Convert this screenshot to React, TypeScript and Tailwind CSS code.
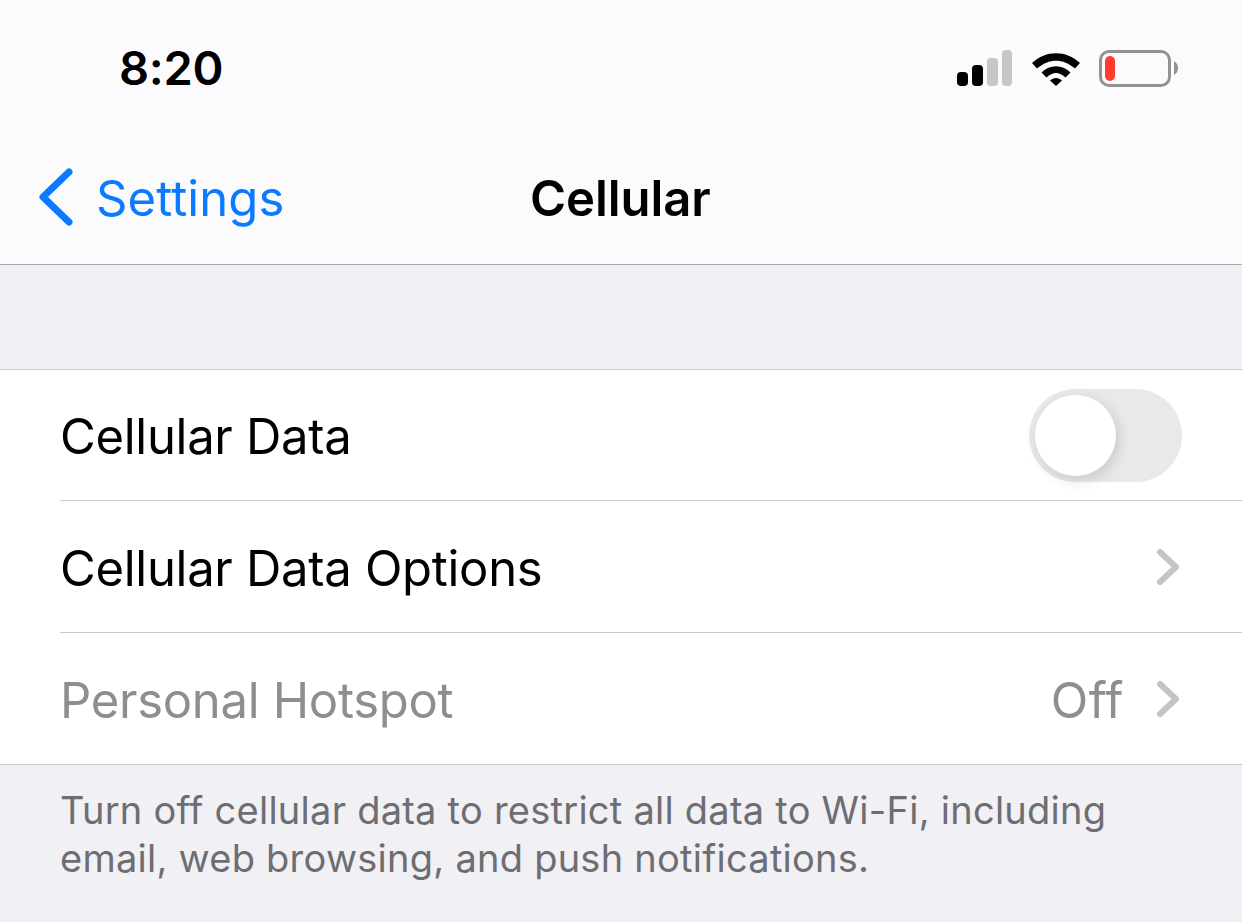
const font = "font-['Inter',sans-serif]";

function SignalIcon() {
  return (
    <svg width="56" height="37" viewBox="0 0 56 37">
      <rect x="1" y="22" width="11" height="14" rx="4" fill="#000" />
      <rect x="16" y="15" width="11" height="21" rx="4" fill="#000" />
      <rect x="31" y="8" width="11" height="28" rx="4" fill="#c7c7c9" />
      <rect x="46" y="0" width="10" height="36" rx="4" fill="#c7c7c9" />
    </svg>
  );
}

function WifiIcon() {
  return (
    <svg width="48" height="36" viewBox="0 0 48 36">
      <path d="M0 13 C14 0 34 0 48 13 L43 18.5 C31 8 17 8 5 18.5 Z" fill="#000" />
      <path d="M9.5 22.5 C18 14 30 14 38.500 22.500 L33.500 27.500 C27 21.500 21 21.500 14.500 27.500 Z" fill="#000" />
      <path d="M18 30.500 C21.500 27 26.500 27 30 30.500 L24 36 Z" fill="#000" />
    </svg>
  );
}

function BatteryIcon() {
  return (
    <div className="-ml-[1px] flex items-center gap-[3px]">
      <div className="flex h-[37px] w-[72px] items-center rounded-[10px] border-[3px] border-[#929293] p-[3px]">
        <div className="h-[25px] w-[10px] rounded-[5px] bg-[#ff3b30]" />
      </div>
      <svg width="4" height="14" viewBox="0 0 4 14">
        <path d="M0 0 C3 2 4 4 4 7 C4 10 3 12 0 14 Z" fill="#929293" />
      </svg>
    </div>
  );
}

function Chevron() {
  return (
    <svg width="24" height="38" viewBox="0 0 24 38" fill="none">
      <path d="M4 4 L20 19 L4 34" stroke="#c4c4c7" strokeWidth="6" strokeLinecap="round" strokeLinejoin="round" />
    </svg>
  );
}

function Row({ label, muted, children, className }: { label: string; muted?: boolean; children?: React.ReactNode; className: string }) {
  return (
    <div className="pl-[60px]">
      <div className={`flex items-center justify-between ${className}`}>
        <span className={`pt-[4px] text-[49px] tracking-[-0.3px] ${muted ? 'text-[#8e8e90]' : 'text-black'}`}>{label}</span>
        {children}
      </div>
    </div>
  );
}

export default function App() {
  return (
    <div className={`${font} flex h-[922px] w-[1242px] flex-col overflow-hidden bg-[#f0f0f5] antialiased`}>
      <header className="h-[265px] border-b border-[#a9a9ab] bg-[#fbfbfe]">
        <div className="flex h-[136px] items-center justify-between pl-[119px] pr-[64px]">
          <span className="text-[47px] font-semibold tracking-[-0.3px] text-black">8:20</span>
          <div className="flex items-center gap-[20px]">
            <SignalIcon />
            <WifiIcon />
            <BatteryIcon />
          </div>
        </div>
        <nav className="relative flex h-[128px] items-center pb-[5px] pl-[38px]">
          <svg width="36" height="60" viewBox="0 0 36 60" fill="none">
            <path d="M31 4 L5 29 L31 54" stroke="#0a7aff" strokeWidth="7" strokeLinecap="round" strokeLinejoin="round" />
          </svg>
          <span className="ml-[22px] pt-[2px] text-[49px] tracking-[0.1px] text-[#0a7aff]">Settings</span>
          <span className="absolute left-[530px] pt-[2px] text-[49px] font-semibold tracking-[-0.05px] text-black">Cellular</span>
        </nav>
      </header>
      <div className="h-[104px]" />
      <section className="border-y border-[#c9c9cb] bg-white">
        <Row label="Cellular Data" className="h-[131px] border-b border-[#c9c9cb] pr-[60px]">
          <div className="h-[93px] w-[153px] rounded-full bg-[#e9e9eb] p-[6px]">
            <div className="h-[81px] w-[81px] rounded-full bg-white shadow-[3px_4px_14px_rgba(0,0,0,0.14)]" />
          </div>
        </Row>
        <Row label="Cellular Data Options" className="h-[132px] border-b border-[#c9c9cb] pr-[62px]">
          <Chevron />
        </Row>
        <Row label="Personal Hotspot" muted className="h-[131px] pr-[62px]">
          <div className="flex items-center gap-[32px]">
            <span className="pt-[4px] text-[49px] tracking-[0.5px] text-[#8e8e90]">Off</span>
            <Chevron />
          </div>
        </Row>
      </section>
      <p className="px-[60px] pt-[21px] text-[38px] leading-[48px] tracking-[0.25px] text-[#6d6d72]">
        Turn off cellular data to restrict all data to Wi-Fi, including email, web browsing, and push notifications.
      </p>
    </div>
  );
}
